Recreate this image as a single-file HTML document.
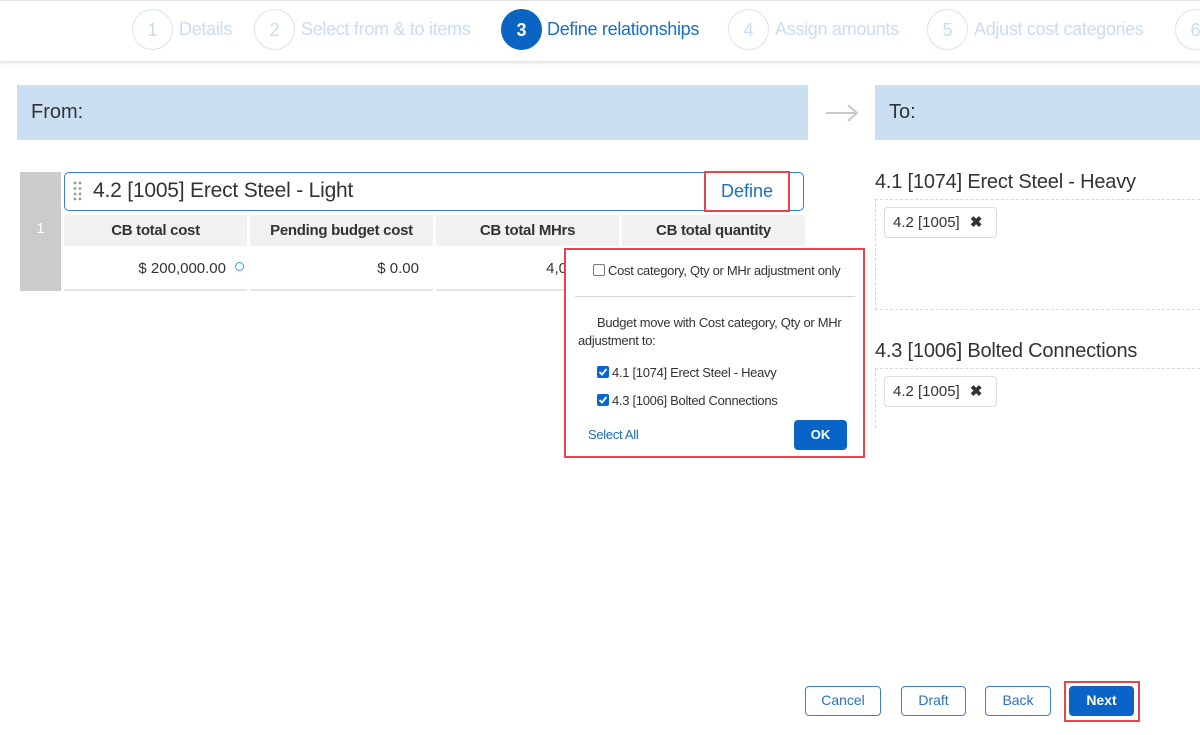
<!DOCTYPE html>
<html><head><style>
*{margin:0;padding:0;box-sizing:border-box}
body{width:1200px;height:735px;background:#fff;font-family:"Liberation Sans",sans-serif;position:relative;overflow:hidden;color:#333}
.a{position:absolute;white-space:nowrap}
.circ{position:absolute;width:41px;height:41px;border:1.5px solid #d5e4f5;border-radius:50%;color:#c9dcf2;font-size:18px;text-align:center;line-height:40px}
.st{position:absolute;top:19px;font-size:18px;color:#c9dcf2;letter-spacing:-0.3px}
.th{position:absolute;top:215px;height:31px;background:#f1f1f1;font-weight:bold;font-size:15px;text-align:center;line-height:31px;color:#333;letter-spacing:-0.3px}
.td{position:absolute;top:247px;height:44px;border-bottom:2px solid #e6e6e6;font-size:15px;text-align:right;line-height:44px;padding-right:14px}
.chip{position:absolute;width:113px;height:31px;border:1px solid #ddd;border-radius:4px;font-size:15px;line-height:29px;padding-left:8px;color:#333}
.btn{position:absolute;top:686px;height:30px;border:1.5px solid #3b7fd4;border-radius:4px;color:#2b6fc2;font-size:14px;text-align:center;line-height:27px;background:#fff}
.cb{position:absolute;width:12px;height:12px;border-radius:2px}
.p{font-size:13px;letter-spacing:-0.3px;color:#333}
</style></head><body>
<div class="a" style="left:0;top:0;width:1200px;height:61px;border-top:1px solid #e2e2e2;box-shadow:0 2px 3px rgba(0,0,0,0.12)"></div>
<div class="circ" style="left:132px;top:9px">1</div><div class="st" style="left:179px">Details</div>
<div class="circ" style="left:254px;top:9px">2</div><div class="st" style="left:301px">Select from &amp; to items</div>
<div class="circ" style="left:501px;top:9px;background:#0a64c2;border-color:#0a64c2;color:#fff;font-weight:bold">3</div><div class="st" style="left:547px;color:#1a6fc4">Define relationships</div>
<div class="circ" style="left:728px;top:9px">4</div><div class="st" style="left:775px">Assign amounts</div>
<div class="circ" style="left:927px;top:9px">5</div><div class="st" style="left:974px">Adjust cost categories</div>
<div class="circ" style="left:1175px;top:9px">6</div>

<div class="a" style="left:17px;top:85px;width:791px;height:55px;background:#cbdff3"></div>
<div class="a" style="left:31px;top:101px;font-size:20px;color:#333">From:</div>
<svg class="a" style="left:824px;top:103px" width="36" height="20"><path d="M2 10H33M24 2L33 10L24 18" stroke="#c8c8c8" stroke-width="2" fill="none"/></svg>
<div class="a" style="left:875px;top:85px;width:325px;height:55px;background:#cbdff3"></div>
<div class="a" style="left:889px;top:101px;font-size:20px;color:#333">To:</div>

<div class="a" style="left:20px;top:172px;width:41px;height:119px;background:#cbcbcb;color:#fff;font-size:15px;text-align:center;line-height:114px">1</div>
<div class="a" style="left:64px;top:172px;width:740px;height:39px;border:1.3px solid #3a7bd5;border-radius:5px"></div>
<svg class="a" style="left:73px;top:181px" width="10" height="20"><g fill="#999"><circle cx="2" cy="2" r="1.4"/><circle cx="7" cy="2" r="1.4"/><circle cx="2" cy="7.5" r="1.4"/><circle cx="7" cy="7.5" r="1.4"/><circle cx="2" cy="13" r="1.4"/><circle cx="7" cy="13" r="1.4"/><circle cx="2" cy="18" r="1.4"/><circle cx="7" cy="18" r="1.4"/></g></svg>
<div class="a" style="left:93px;top:179px;font-size:21px;color:#333;letter-spacing:-0.2px">4.2 [1005] Erect Steel - Light</div>
<div class="a" style="left:704px;top:171px;width:86px;height:41px;border:2px solid #e8454a;color:#1a6fc4;font-size:18px;text-align:center;line-height:37px;background:#fff">Define</div>

<div class="th" style="left:64px;width:183px">CB total cost</div>
<div class="th" style="left:250px;width:183px">Pending budget cost</div>
<div class="th" style="left:436px;width:183px">CB total MHrs</div>
<div class="th" style="left:622px;width:183px">CB total quantity</div>
<div class="td" style="left:64px;width:183px;padding-right:21px">$ 200,000.00</div>
<div class="a" style="left:235px;top:262px;width:9px;height:9px;border:1.5px solid #3aa0d8;border-radius:50%"></div>
<div class="td" style="left:250px;width:183px">$ 0.00</div>
<div class="td" style="left:436px;width:183px;padding-right:52px">4,0</div>
<div class="td" style="left:622px;width:183px"></div>

<div class="a" style="left:564px;top:248px;width:301px;height:210px;border:2px solid #e8454a;background:#fff"></div>
<div class="cb" style="left:593px;top:264px;border:1px solid #777"></div>
<div class="a p" style="left:608px;top:263px">Cost category, Qty or MHr adjustment only</div>
<div class="a" style="left:575px;top:296px;width:280px;height:1px;background:#d6d6d6"></div>
<div class="a p" style="left:597px;top:315px">Budget move with Cost category, Qty or MHr</div>
<div class="a p" style="left:578px;top:333px">adjustment to:</div>
<svg class="cb" style="left:597px;top:366px;background:#0a66d0" viewBox="0 0 12 12"><path d="M2.5 6L5 8.5L9.5 3" stroke="#fff" stroke-width="1.8" fill="none"/></svg>
<div class="a p" style="left:612px;top:365px">4.1 [1074] Erect Steel - Heavy</div>
<svg class="cb" style="left:597px;top:394px;background:#0a66d0" viewBox="0 0 12 12"><path d="M2.5 6L5 8.5L9.5 3" stroke="#fff" stroke-width="1.8" fill="none"/></svg>
<div class="a p" style="left:612px;top:393px">4.3 [1006] Bolted Connections</div>
<div class="a p" style="left:588px;top:427px;color:#1a6fc4">Select All</div>
<div class="a" style="left:794px;top:420px;width:53px;height:30px;background:#0a64c8;border-radius:4px;color:#fff;font-size:13px;font-weight:bold;text-align:center;line-height:30px">OK</div>

<div class="a" style="left:875px;top:171px;font-size:20px;color:#333;letter-spacing:-0.2px">4.1 [1074] Erect Steel - Heavy</div>
<div class="a" style="left:875px;top:199px;width:340px;height:111px;border:1px dashed #d8d8d8"></div>
<div class="chip" style="left:884px;top:207px">4.2 [1005] <b style="margin-left:6px">✖</b></div>
<div class="a" style="left:875px;top:340px;font-size:20px;color:#333;letter-spacing:-0.2px">4.3 [1006] Bolted Connections</div>
<div class="a" style="left:875px;top:368px;width:340px;height:60px;border:1px dashed #d8d8d8;border-bottom:none"></div>
<div class="chip" style="left:884px;top:376px">4.2 [1005] <b style="margin-left:6px">✖</b></div>

<div class="btn" style="left:805px;width:76px">Cancel</div>
<div class="btn" style="left:901px;width:65px">Draft</div>
<div class="btn" style="left:985px;width:66px">Back</div>
<div class="a" style="left:1064px;top:681px;width:76px;height:41px;border:2px solid #e8454a"></div>
<div class="btn" style="left:1069px;width:65px;background:#0a64c8;border-color:#0a64c8;color:#fff;font-weight:bold">Next</div>
</body></html>
